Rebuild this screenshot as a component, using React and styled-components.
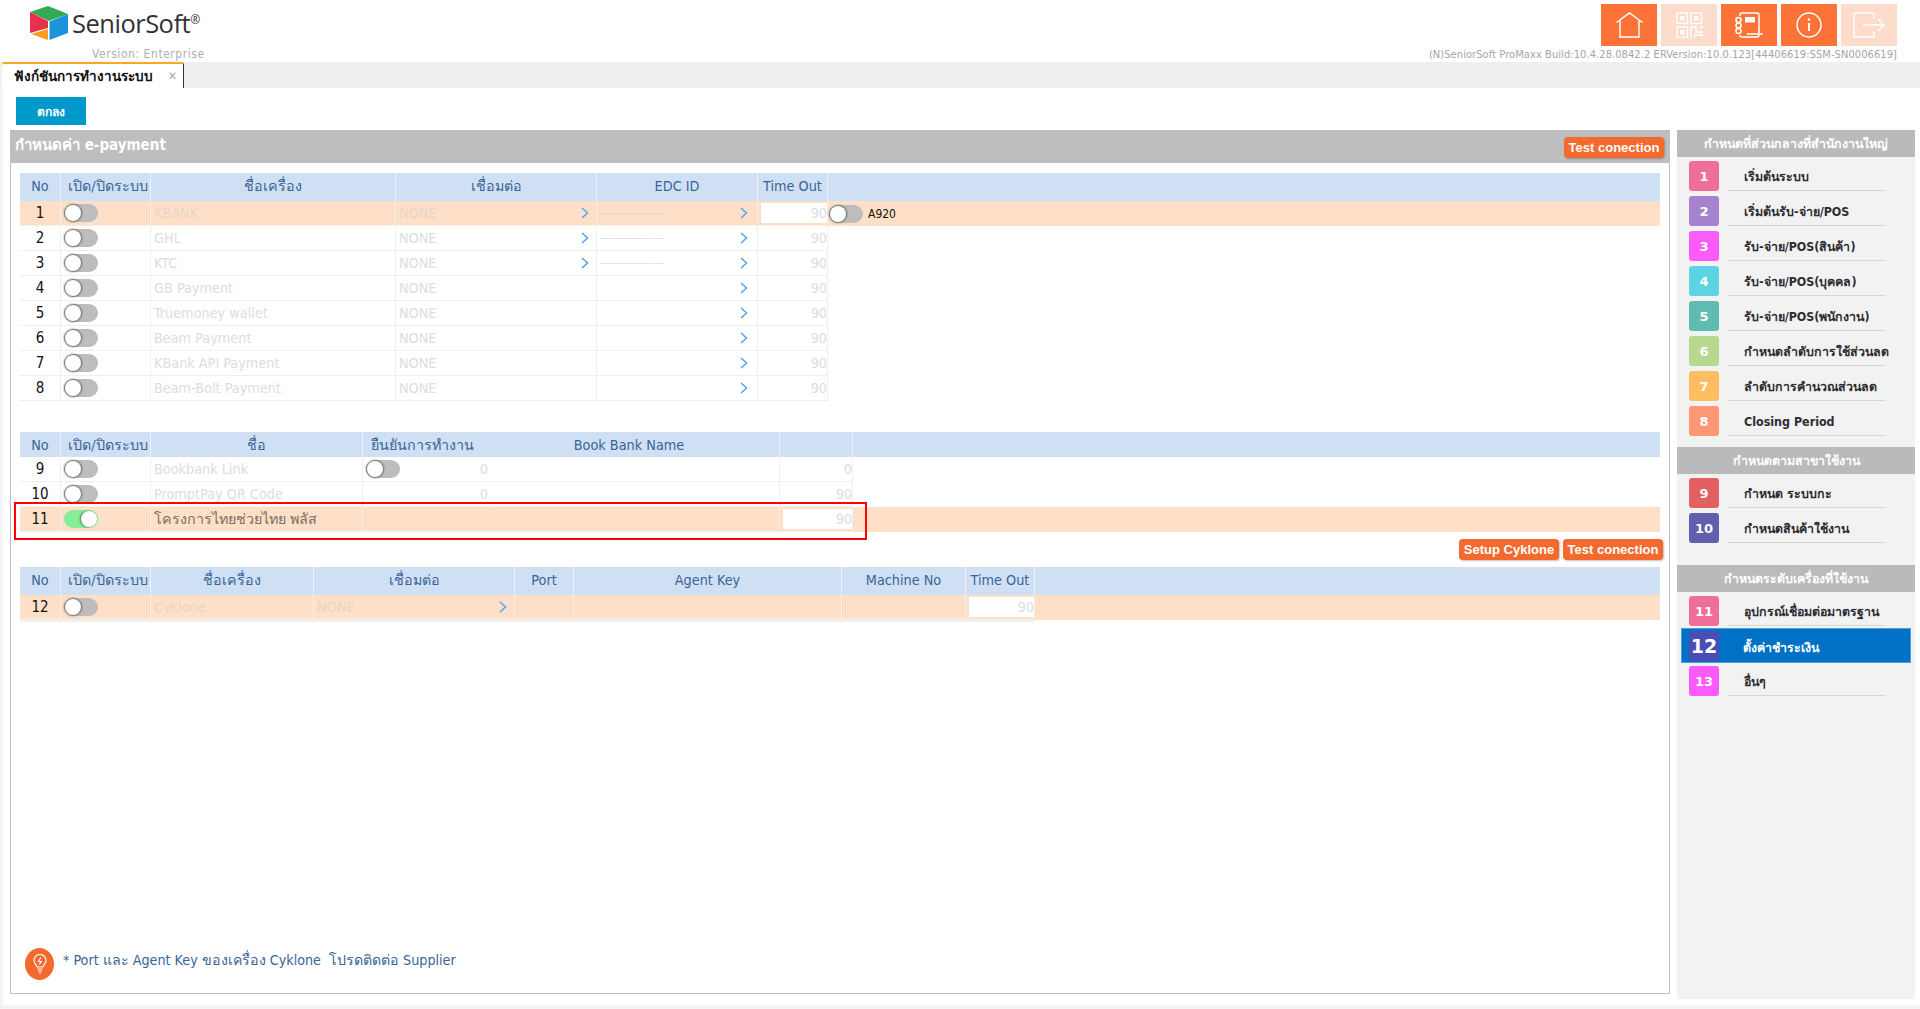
import React from "react";
import styled, { createGlobalStyle } from "styled-components";

const GlobalStyle = createGlobalStyle`
  html, body { margin: 0; padding: 0; background: #fff; }
  body {
    font-family: "DejaVu Sans Condensed", "DejaVu Sans", "Noto Sans", sans-serif;
    font-size: 14px;
    color: #333;
    overflow: hidden;
  }
`;

const Page = styled.div`
  width: 1920px;
  height: 1009px;
  overflow: hidden;
`;

/* top bar */
const TopBar = styled.header`
  height: 62px;
  display: flex;
  justify-content: space-between;
`;
const Brand = styled.div`
  width: 300px;
  padding: 6px 0 0 30px;
  box-sizing: border-box;
`;
const LogoRow = styled.div`
  display: flex;
  align-items: center;
  height: 34px;
  gap: 4px;
`;
const LogoText = styled.span`
  font-family: "Open Sans", "Liberation Sans", sans-serif;
  font-size: 25.5px;
  letter-spacing: -0.5px;
  color: #333335;
  sup {
    font-size: 12px;
    vertical-align: 9px;
    line-height: 0;
  }
`;
const Version = styled.div`
  margin: 7px 0 0 62px;
  font-size: 12px;
  color: #b3adad;
  letter-spacing: 0.55px;
`;
const TopRight = styled.div`
  width: 330px;
  padding: 4px 23px 0 0;
  box-sizing: border-box;
  display: flex;
  flex-direction: column;
  align-items: flex-end;
`;
const IconRow = styled.div`
  display: flex;
  gap: 4px;
`;
const IconButton = styled.div`
  width: 56px;
  height: 42px;
  background: ${(p) => (p.$off ? "#fedccb" : "#fd7337")};
  display: flex;
  align-items: center;
  justify-content: center;
`;
const BuildInfo = styled.div`
  margin-top: 2px;
  width: 560px;
  text-align: right;
  font-size: 11px;
  letter-spacing: 0.08px;
  white-space: nowrap;
  color: #a5a5a5;
`;

/* tabs */
const TabBar = styled.nav`
  height: 26px;
  background: #efefef;
  padding-left: 2px;
`;
const Tab = styled.div`
  width: 182px;
  height: 26px;
  box-sizing: border-box;
  background: #fff;
  border-top: 2px solid #f9a825;
  border-right: 1px solid #333;
  border-radius: 3px 3px 0 0;
  display: flex;
  align-items: center;
  justify-content: space-between;
  padding: 0 6px 0 12px;
  font-size: 13.5px;
  font-weight: 700;
  color: #111;
`;
const TabClose = styled.span`
  color: #aaa;
  font-size: 12px;
  font-weight: 700;
`;

/* body layout */
const Content = styled.div`
  display: flex;
  flex-direction: column;
  height: 921px;
  padding: 9px 5px 0 7px;
  box-sizing: border-box;
  border-left: 3px solid #f4f4f4;
  border-bottom: 4px solid #f4f4f4;
`;
const OkButton = styled.div`
  width: 70px;
  height: 28px;
  margin-left: 6px;
  background: #0099cc;
  color: #fff;
  font-size: 12px;
  font-weight: 700;
  display: flex;
  align-items: center;
  justify-content: center;
`;
const Columns = styled.div`
  display: flex;
  gap: 7px;
  margin-top: 5px;
  flex: 1;
  min-height: 0;
`;

/* main panel */
const Panel = styled.section`
  width: 1660px;
  height: 864px;
  box-sizing: border-box;
  border: 1px solid #bdbdbd;
  border-top: 0;
  border-radius: 3px 3px 0 0;
  display: flex;
  flex-direction: column;
`;
const PanelHead = styled.div`
  height: 33px;
  margin: 0 -1px;
  flex: none;
  background: #bebebe;
  display: flex;
  align-items: center;
  justify-content: space-between;
  padding: 1px 6px 0 5px;
  box-sizing: border-box;
  color: #fff;
  font-size: 15px;
  font-weight: 700;
`;
const PanelTitle = styled.span`
  margin-top: -5px;
`;
const ActionButton = styled.div`
  height: 21px;
  width: 100px;
  box-sizing: border-box;
  border-radius: 4px;
  background: #f46a2e;
  box-shadow: 1px 1px 2px rgba(0, 0, 0, 0.25);
  color: #fff;
  font-family: "Liberation Sans", sans-serif;
  font-size: 13px;
  font-weight: 700;
  display: flex;
  align-items: center;
  justify-content: center;
  white-space: nowrap;
`;
const PanelBody = styled.div`
  flex: 1;
  padding: 10px 9px 0 9px;
  display: flex;
  flex-direction: column;
  position: relative;
`;
const ActionRow = styled.div`
  height: 28px;
  margin-top: 7px;
  display: flex;
  gap: 4px;
  justify-content: flex-end;
  margin-right: -3px;
`;

const Grid = styled.div`
  display: grid;
  grid-template-columns: ${(p) => p.$cols};
  width: 1640px;
  margin-top: ${(p) => p.$top || 0}px;
`;
const HeadCell = styled.div`
  height: ${(p) => p.$h}px;
  box-sizing: border-box;
  padding-bottom: ${(p) => (p.$h > 25 ? "3px" : "0")};
  padding-left: ${(p) => p.$pl || 0}px;
  padding-right: ${(p) => p.$pr || 0}px;
  background: #cfe0f4;
  border-right: 1px solid ${(p) => (p.$plain ? "#cfe0f4" : "#eef3f9")};
  color: #3a6496;
  font-size: 14.3px;
  display: flex;
  align-items: center;
  justify-content: center;
  white-space: nowrap;
`;
const Cell = styled.div`
  height: 25px;
  box-sizing: border-box;
  background: ${(p) => (p.$active ? "#fee0c8" : "#fff")};
  border-right: 1px solid ${(p) => (p.$plain ? "transparent" : p.$active ? "#f1efec" : "#efefef")};
  border-bottom: 1px solid ${(p) => (p.$active ? "#f1efec" : "#efefef")};
  color: #ddd;
  font-size: 14.3px;
  display: flex;
  align-items: center;
  white-space: nowrap;
  padding-left: 3px;
  ${(p) => p.$under && "box-shadow: 0 2px 0 #efefef;"}
`;
const NoCell = styled(Cell)`
  justify-content: center;
  color: #111;
  font-size: 15px;
  padding: 0;
`;
const NameCell = styled(Cell)`
  padding-left: 3px;
  color: ${(p) => (p.$strong ? "#7a6d62" : p.$active ? "#e6d6ca" : "#ddd")};
`;
const ArrowCell = styled(Cell)`
  justify-content: space-between;
  padding-right: ${(p) => p.$pr || 7}px;
  color: ${(p) => (p.$active ? "#e6d6ca" : "#ddd")};
`;
const Dashes = styled.span`
  color: #ccc;
  font-size: 8px;
  letter-spacing: 0.3px;
`;
const NumberCell = styled(Cell)`
  justify-content: flex-end;
  padding: 0;
`;
const NumberInput = styled.div`
  flex: 1;
  height: 20px;
  margin-left: 3px;
  background: #fff;
  color: #ddd;
  display: flex;
  align-items: center;
  justify-content: flex-end;
`;
const PushRight = styled.span`
  margin-left: auto;
`;
const RestCell = styled.div`
  height: 25px;
  background: ${(p) => (p.$active ? "#fee0c8" : "transparent")};
  display: flex;
  align-items: center;
  gap: 5px;
  font-size: 12px;
  color: #111;
`;
const ToggleTrack = styled.div`
  width: 34px;
  height: 18px;
  border-radius: 9px;
  background: ${(p) => (p.$on ? "#86ee95" : "#bdbdbd")};
  position: relative;
  margin-left: ${(p) => p.$left ?? 0}px;
  flex: none;
`;
const ToggleKnob = styled.div`
  position: absolute;
  top: 1px;
  left: ${(p) => (p.$on ? "17px" : "1px")};
  width: 16px;
  height: 16px;
  border-radius: 50%;
  background: #fff;
  box-shadow: ${(p) => (p.$on ? "-1px 0 2px" : "0 0 2px 1px")} rgba(60, 60, 60, 0.7);
`;
const Highlight = styled.div`
  position: absolute;
  left: 3px;
  top: 339px;
  width: 853px;
  height: 38px;
  box-sizing: border-box;
  border: 2px solid #f00;
  pointer-events: none;
`;

const Note = styled.div`
  position: absolute;
  left: 14px;
  bottom: 13px;
  display: flex;
  align-items: center;
  gap: 9px;
  color: #3a6496;
  font-size: 14.2px;
`;
const NoteIcon = styled.div`
  width: 29px;
  height: 32px;
  border-radius: 50%;
  background: #f46a2e;
  display: flex;
  align-items: center;
  justify-content: center;
  margin-top: 8px;
`;

/* side menu */
const Side = styled.aside`
  width: 238px;
  height: 869px;
  background: #f2f2f2;
`;
const SideHead = styled.div`
  height: 27px;
  margin-top: ${(p) => p.$top || 0}px;
  background: #bababa;
  color: #fff;
  font-size: 12.4px;
  font-weight: 700;
  display: flex;
  align-items: center;
  justify-content: center;
`;
const SideList = styled.div`
  display: flex;
  flex-direction: column;
  padding-top: 4px;
`;
const SideItem = styled.div`
  height: 35px;
  box-sizing: border-box;
  display: flex;
  padding: 0 0 5px 12px;
`;
const ActiveItem = styled.div`
  height: 35px;
  box-sizing: border-box;
  display: flex;
  margin: -3px 4px 3px;
  padding: 2px 0 0 7px;
  background: #0071c5;
  border: 1px solid #4d9cd8;
`;
const Tile = styled.div`
  width: 30px;
  height: 30px;
  flex: none;
  border-radius: 3px;
  background: ${(p) => p.$color};
  color: #fff;
  font-size: ${(p) => (p.$big ? "19px" : "13px")};
  font-weight: 700;
  font-family: "DejaVu Sans", sans-serif;
  display: flex;
  align-items: center;
  justify-content: center;
`;
const ItemLabel = styled.div`
  margin-left: 9px;
  width: 157px;
  box-sizing: border-box;
  padding: 1px 0 0 16px;
  border-bottom: 1px solid #d3d6d6;
  color: #2d2d33;
  font-size: 12.4px;
  font-weight: 700;
  white-space: nowrap;
  display: flex;
  align-items: center;
`;
const ActiveLabel = styled.div`
  margin-left: 24px;
  padding-top: 1px;
  color: #fff;
  font-size: 12.4px;
  font-weight: 700;
  white-space: nowrap;
  display: flex;
  align-items: center;
  height: 30px;
`;

const Chevron = () => (
  <svg width="8" height="12" viewBox="0 0 8 12" fill="none">
    <path d="M1 1l5.5 5L1 11" stroke="#5aa2f0" strokeWidth="1.5" />
  </svg>
);

const Toggle = ({ on, left }) => (
  <ToggleTrack $on={on} $left={left}>
    <ToggleKnob $on={on} />
  </ToggleTrack>
);

const Logo = () => (
  <svg width="38" height="34" viewBox="0 0 38 34">
    <path d="M0 6L18 0l20 8-19 7z" fill="#34a853" />
    <path d="M0 6l18 9v7L0 27z" fill="#e8304e" />
    <path d="M19.5 15.5L38 8v19l-18.500 7z" fill="#1b94dc" />
    <path d="M1 28l17-5v11z" fill="#f99d1c" />
  </svg>
);

const HomeIcon = () => (
  <svg width="27" height="26" viewBox="0 0 27 26" fill="none" stroke="#fff" strokeWidth="1.5">
    <path d="M.5 10.500L13.500 1l13 9.500M4 8v17h19V8" />
  </svg>
);
const QrIcon = () => (
  <svg width="27" height="26" viewBox="0 0 27 26" fill="none" stroke="#fff" strokeWidth="1.4">
    <rect x="1" y="1" width="10.500" height="10.500" />
    <rect x="15" y="1" width="10.500" height="10.500" />
    <rect x="1" y="15" width="10.500" height="10.500" />
    <rect x="4" y="4" width="4.500" height="4.500" fill="#fff" stroke="none" />
    <rect x="18" y="4" width="4.500" height="4.500" fill="#fff" stroke="none" />
    <rect x="4" y="18" width="4.500" height="4.500" fill="#fff" stroke="none" />
    <path d="M15 26V15h5v5h7M24 15h3M19 26v-3h8v3" />
  </svg>
);
const BookIcon = () => (
  <svg width="28" height="27" viewBox="0 0 28 27" fill="none" stroke="#fff" strokeWidth="1.5">
    <path d="M5 4V3a2 2 0 012-2h15a2 2 0 012 2v20a2 2 0 01-2 2H7a2 2 0 01-2-2" />
    <circle cx="3.500" cy="8" r="2.500" />
    <circle cx="3.500" cy="13.500" r="2.500" />
    <circle cx="3.500" cy="19" r="2.500" />
    <rect x="10" y="5" width="10" height="5.500" fill="#fff" stroke="none" />
    <path d="M12 22h16" />
  </svg>
);
const InfoIcon = () => (
  <svg width="26" height="26" viewBox="0 0 26 26" fill="none" stroke="#fff" strokeWidth="1.5">
    <circle cx="13" cy="13" r="12" />
    <path d="M13 11v8" strokeWidth="2" />
    <circle cx="13" cy="7.500" r="1.300" fill="#fff" stroke="none" />
  </svg>
);
const ExitIcon = () => (
  <svg width="32" height="26" viewBox="0 0 32 26" fill="none" stroke="#fff" strokeWidth="1.4">
    <path d="M21 7V1H1v24h20v-6M10 13h21M25 7l6 6-6 6" />
  </svg>
);
const BulbIcon = () => (
  <svg width="14" height="20" viewBox="0 0 14 20" fill="none" stroke="#fff" strokeWidth="1.1">
    <path d="M4 13c0-2-3-3-3-6.500a6 6 0 0112 0C13 10 10 11 10 13z" />
    <path d="M7.800 3.500L5.500 7.500h3L6.200 10.500M4.500 15h5M5 17h4M6 19h2" />
  </svg>
);

const COLS_1 = "41px 90px 245px 201px 161px 70px 1fr";
const COLS_2 = "41px 90px 212px 126px 291px 73px 1fr";
const COLS_3 = "41px 90px 163px 201px 59px 268px 124px 69px 1fr";

const edc = [
  { no: 1, name: "KBANK", link: true, active: true },
  { no: 2, name: "GHL", link: true },
  { no: 3, name: "KTC", link: true },
  { no: 4, name: "GB Payment" },
  { no: 5, name: "Truemoney wallet" },
  { no: 6, name: "Beam Payment" },
  { no: 7, name: "KBank API Payment" },
  { no: 8, name: "Beam-Bolt Payment" },
];

const sections = [
  {
    title: "กำหนดที่ส่วนกลางที่สำนักงานใหญ่",
    items: [
      ["1", "#ee7099", "เริ่มต้นระบบ"],
      ["2", "#a583cf", "เริ่มต้นรับ-จ่าย/POS"],
      ["3", "#fb5cf9", "รับ-จ่าย/POS(สินค้า)"],
      ["4", "#5dd3e3", "รับ-จ่าย/POS(บุคคล)"],
      ["5", "#5fbcb0", "รับ-จ่าย/POS(พนักงาน)"],
      ["6", "#b6d88f", "กำหนดลำดับการใช้ส่วนลด"],
      ["7", "#fdbd60", "ลำดับการคำนวณส่วนลด"],
      ["8", "#fe9775", "Closing Period"],
    ],
  },
  {
    title: "กำหนดตามสาขาใช้งาน",
    top: 6,
    items: [
      ["9", "#e26060", "กำหนด ระบบกะ"],
      ["10", "#6060ac", "กำหนดสินค้าใช้งาน"],
    ],
  },
  {
    title: "กำหนดระดับเครื่องที่ใช้งาน",
    top: 17,
    items: [
      ["11", "#ee7099", "อุปกรณ์เชื่อมต่อมาตรฐาน"],
      ["12", "#4a4db5", "ตั้งค่าชำระเงิน", true],
      ["13", "#fb5cf9", "อื่นๆ"],
    ],
  },
];

export default function App() {
  return (
    <Page>
      <GlobalStyle />
      <TopBar>
        <Brand>
          <LogoRow>
            <Logo />
            <LogoText>
              SeniorSoft<sup>®</sup>
            </LogoText>
          </LogoRow>
          <Version>Version: Enterprise</Version>
        </Brand>
        <TopRight>
          <IconRow>
            <IconButton><HomeIcon /></IconButton>
            <IconButton $off><QrIcon /></IconButton>
            <IconButton><BookIcon /></IconButton>
            <IconButton><InfoIcon /></IconButton>
            <IconButton $off><ExitIcon /></IconButton>
          </IconRow>
          <BuildInfo>(N)SeniorSoft ProMaxx Build:10.4.28.0842.2 ERVersion:10.0.123[44406619:SSM-SN0006619]</BuildInfo>
        </TopRight>
      </TopBar>

      <TabBar>
        <Tab>
          ฟังก์ชันการทำงานระบบ
          <TabClose>✕</TabClose>
        </Tab>
      </TabBar>

      <Content>
        <OkButton>ตกลง</OkButton>
        <Columns>
          <Panel>
            <PanelHead>
              <PanelTitle>กำหนดค่า e-payment</PanelTitle>
              <ActionButton>Test conection</ActionButton>
            </PanelHead>
            <PanelBody>
              <Grid $cols={COLS_1}>
                <HeadCell $h={28}>No</HeadCell>
                <HeadCell $h={28} $pl={5}>เปิด/ปิดระบบ</HeadCell>
                <HeadCell $h={28}>ชื่อเครื่อง</HeadCell>
                <HeadCell $h={28}>เชื่อมต่อ</HeadCell>
                <HeadCell $h={28}>EDC ID</HeadCell>
                <HeadCell $h={28}>Time Out</HeadCell>
                <HeadCell $h={28} $plain />
                {edc.map((r) => (
                  <React.Fragment key={r.no}>
                    <NoCell $active={r.active}>{r.no}</NoCell>
                    <Cell $active={r.active}><Toggle /></Cell>
                    <NameCell $active={r.active}>{r.name}</NameCell>
                    <ArrowCell $active={r.active}>
                      NONE
                      {r.link && <Chevron />}
                    </ArrowCell>
                    <ArrowCell $active={r.active} $pr={9}>
                      {r.link ? <Dashes>----------------------</Dashes> : <span />}
                      <Chevron />
                    </ArrowCell>
                    <NumberCell $active={r.active}>
                      {r.active ? <NumberInput>90</NumberInput> : "90"}
                    </NumberCell>
                    <RestCell $active={r.active}>
                      {r.active && (
                        <>
                          <Toggle left={1} />
                          A920
                        </>
                      )}
                    </RestCell>
                  </React.Fragment>
                ))}
              </Grid>

              <Grid $cols={COLS_2} $top={31}>
                <HeadCell $h={25}>No</HeadCell>
                <HeadCell $h={25} $pl={5}>เปิด/ปิดระบบ</HeadCell>
                <HeadCell $h={25}>ชื่อ</HeadCell>
                <HeadCell $h={25} $plain $pr={7}>ยืนยันการทำงาน</HeadCell>
                <HeadCell $h={25} $pr={10}>Book Bank Name</HeadCell>
                <HeadCell $h={25} />
                <HeadCell $h={25} $plain />

                <NoCell>9</NoCell>
                <Cell><Toggle /></Cell>
                <NameCell>Bookbank Link</NameCell>
                <NumberCell $plain>
                  <Toggle left={3} />
                  <PushRight>0</PushRight>
                </NumberCell>
                <Cell />
                <NumberCell>0</NumberCell>
                <RestCell />

                <NoCell>10</NoCell>
                <Cell><Toggle /></Cell>
                <NameCell>PromptPay QR Code</NameCell>
                <NumberCell $plain>0</NumberCell>
                <Cell />
                <NumberCell>90</NumberCell>
                <RestCell />

                <NoCell $active>11</NoCell>
                <Cell $active><Toggle on /></Cell>
                <NameCell $active $strong>โครงการไทยช่วยไทย พลัส</NameCell>
                <Cell $active $plain />
                <Cell $active />
                <NumberCell $active><NumberInput>90</NumberInput></NumberCell>
                <RestCell $active />
              </Grid>

              <ActionRow>
                <ActionButton>Setup Cyklone</ActionButton>
                <ActionButton>Test conection</ActionButton>
              </ActionRow>

              <Grid $cols={COLS_3}>
                <HeadCell $h={28}>No</HeadCell>
                <HeadCell $h={28} $pl={5}>เปิด/ปิดระบบ</HeadCell>
                <HeadCell $h={28}>ชื่อเครื่อง</HeadCell>
                <HeadCell $h={28}>เชื่อมต่อ</HeadCell>
                <HeadCell $h={28}>Port</HeadCell>
                <HeadCell $h={28}>Agent Key</HeadCell>
                <HeadCell $h={28}>Machine No</HeadCell>
                <HeadCell $h={28}>Time Out</HeadCell>
                <HeadCell $h={28} $plain />

                <NoCell $active $under>12</NoCell>
                <Cell $active $under><Toggle /></Cell>
                <NameCell $active $under>Cyklone</NameCell>
                <ArrowCell $active $under>NONE<Chevron /></ArrowCell>
                <Cell $active $under />
                <Cell $active $under />
                <Cell $active $under />
                <NumberCell $active $under><NumberInput>90</NumberInput></NumberCell>
                <RestCell $active />
              </Grid>

              <Note>
                <NoteIcon><BulbIcon /></NoteIcon>
                <span>* Port และ Agent Key ของเครื่อง Cyklone&nbsp; โปรดติดต่อ Supplier</span>
              </Note>
              <Highlight />
            </PanelBody>
          </Panel>

          <Side>
            {sections.map((s) => (
              <React.Fragment key={s.title}>
                <SideHead $top={s.top}>{s.title}</SideHead>
                <SideList>
                  {s.items.map(([no, color, label, active]) =>
                    active ? (
                      <ActiveItem key={no}>
                        <Tile $color={color} $big>{no}</Tile>
                        <ActiveLabel>{label}</ActiveLabel>
                      </ActiveItem>
                    ) : (
                      <SideItem key={no}>
                        <Tile $color={color}>{no}</Tile>
                        <ItemLabel>{label}</ItemLabel>
                      </SideItem>
                    )
                  )}
                </SideList>
              </React.Fragment>
            ))}
          </Side>
        </Columns>
      </Content>
    </Page>
  );
}
